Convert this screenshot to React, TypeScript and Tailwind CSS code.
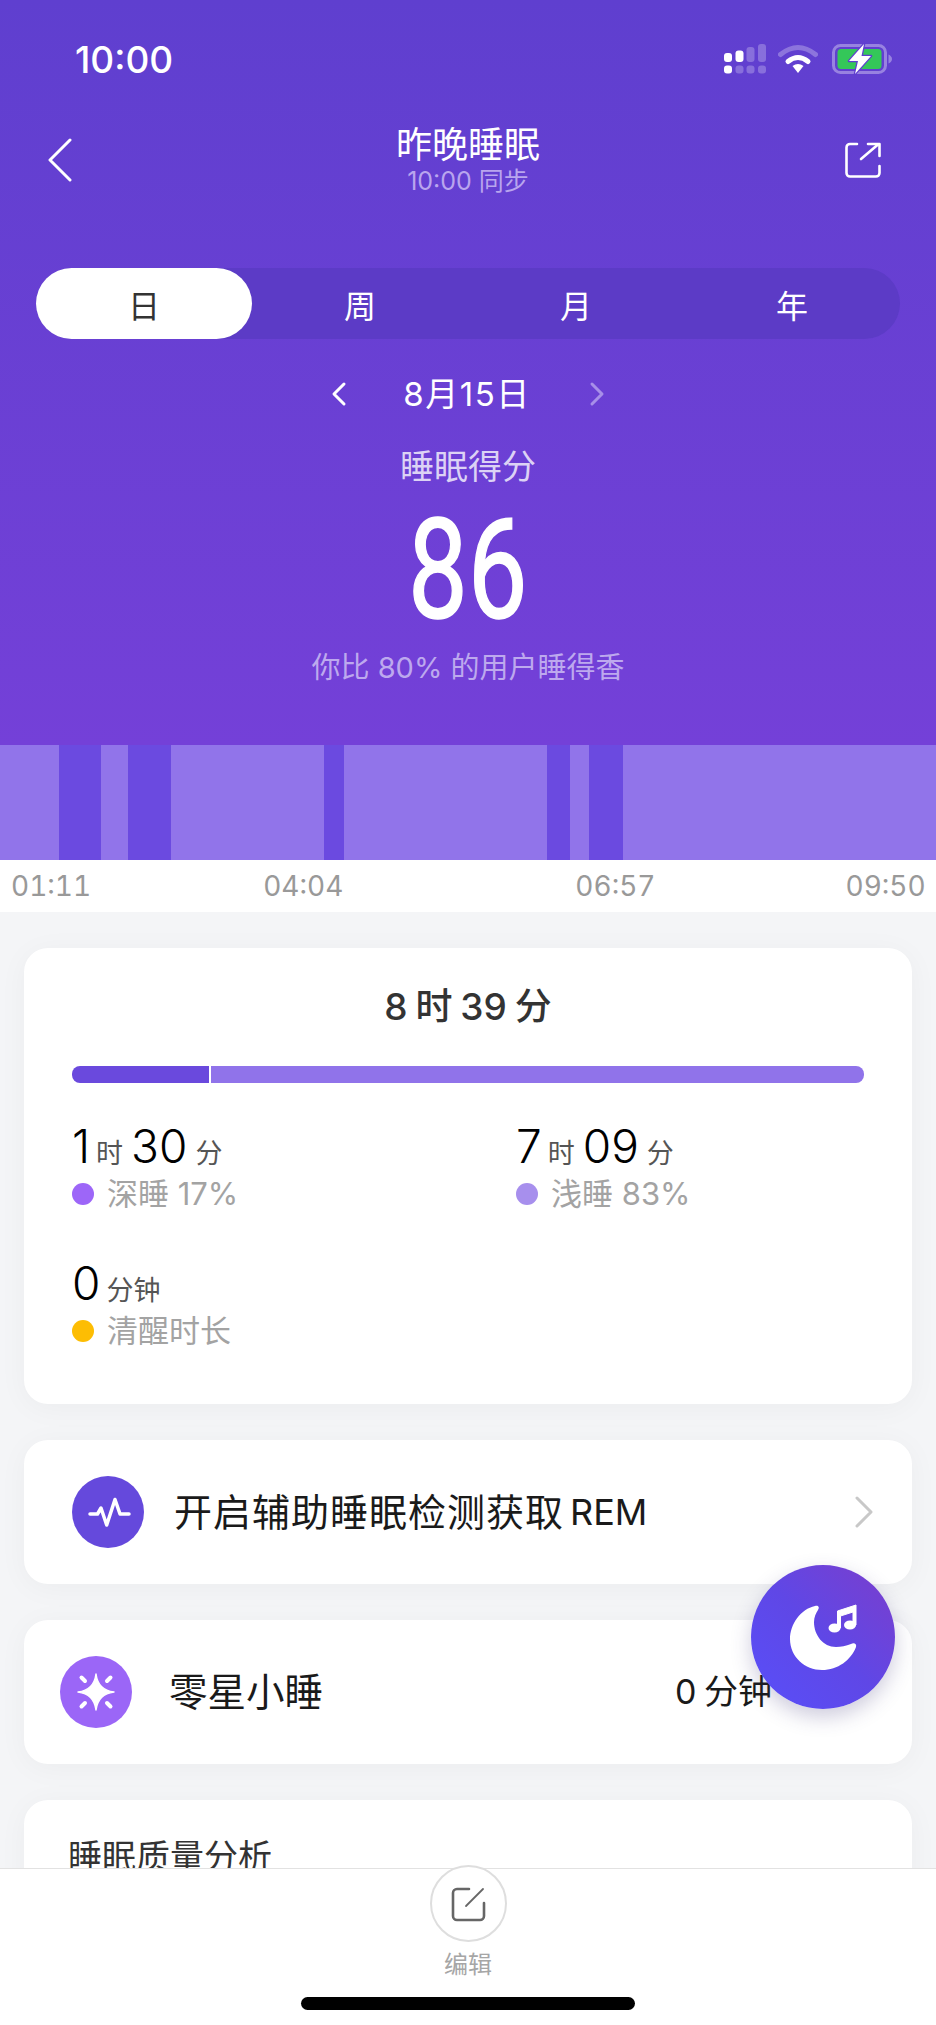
import React from "react";

const font = "font-['Inter','Noto_Sans_CJK_SC',sans-serif]";

function Signal() {
  return (
    <svg width="42" height="30" viewBox="0 0 42 30" className="block">
      <g fill="#fff">
        <rect x="0" y="9" width="8" height="9" rx="3" />
        <rect x="11.5" y="6.5" width="8" height="11.5" rx="3" />
        <rect x="0" y="21.5" width="8" height="8" rx="3" />
      </g>
      <g fill="#fff" fillOpacity="0.25">
        <rect x="22.5" y="3" width="8" height="15" rx="3" />
        <rect x="34" y="0" width="8" height="18" rx="3" />
        <rect x="11.5" y="21.5" width="8" height="8" rx="3" />
        <rect x="22.5" y="21.5" width="8" height="8" rx="3" />
        <rect x="34" y="21.5" width="8" height="8" rx="3" />
      </g>
    </svg>
  );
}

function Wifi() {
  return (
    <svg width="40" height="30" viewBox="0 0 40 30" className="block">
      <path d="M2.5 10.5Q20 -3.5 37.5 10.5" fill="none" stroke="#fff" strokeOpacity="0.28" strokeWidth="5" strokeLinecap="round" />
      <path d="M10 17.5Q20 9.5 30 17.5" fill="none" stroke="#fff" strokeWidth="5" strokeLinecap="round" />
      <path d="M14.5 22Q20 18 25.500 22L20 29Z" fill="#fff" />
    </svg>
  );
}

function Battery() {
  return (
    <svg width="60" height="32" viewBox="0 0 60 32" className="block">
      <rect x="1.5" y="2.5" width="52" height="27" rx="7" fill="none" stroke="#fff" strokeOpacity="0.35" strokeWidth="3" />
      <rect x="5.5" y="6" width="44" height="20" rx="3.5" fill="#34c759" />
      <path d="M56.5 11.5C58.5 12.5 60 14 60 16C60 18 58.5 19.5 56.5 20.5Z" fill="#fff" fillOpacity="0.35" />
      <path d="M32 1L17 18H26L23 31L39 13H29.5Z" fill="#fff" stroke="#5f3ecf" strokeWidth="2.5" strokeLinejoin="round" paintOrder="stroke" />
    </svg>
  );
}

function Share() {
  return (
    <svg width="36" height="36" viewBox="0 0 36 36" fill="none" stroke="#fff" strokeWidth="2.6" strokeLinecap="round" strokeLinejoin="round" className="block">
      <path d="M12 2H5A3.500 3.500 0 0 0 1.500 5.500V31A3.500 3.500 0 0 0 5 34.500H31A3.500 3.500 0 0 0 34.500 31V24" />
      <path d="M16 17L33 2.500" />
      <path d="M23 2H34.500V14" />
    </svg>
  );
}

function Stat({ n1, u1, n2, u2, dot, label }: { n1: string; u1: string; n2?: string; u2?: string; dot: string; label: string }) {
  return (
    <div className="flex flex-col">
      <div className="flex h-[50px] items-baseline text-[46px] leading-[50px] font-light text-black">
        <span>{n1}</span>
        <span className="ml-[6px] text-[27px] font-normal text-[#555]">{u1}</span>
        {n2 ? <span className="ml-[8px]">{n2}</span> : null}
        {u2 ? <span className="ml-[8px] text-[27px] font-normal text-[#555]">{u2}</span> : null}
      </div>
      <div className="mt-[3px] flex h-[40px] items-center">
        <span className={`h-[22px] w-[22px] rounded-full ${dot}`} />
        <span className="ml-[13px] text-[31px] leading-[40px] font-normal text-[#a3a3a3]">{label}</span>
      </div>
    </div>
  );
}

export default function App() {
  return (
    <div className={`relative h-[2025px] w-[936px] overflow-hidden bg-[#f4f5f7] ${font}`}>
      <header className="flex h-[745px] flex-col bg-gradient-to-b from-[#5f3fcf] to-[#7440d8] text-white">
        <div className="flex h-[118px] items-center">
          <span className="ml-[75px] text-[37px] leading-none font-medium">10:00</span>
          <div className="ml-auto mr-[44px] flex items-center">
            <Signal />
            <span className="ml-[12px]"><Wifi /></span>
            <span className="ml-[14px]"><Battery /></span>
          </div>
        </div>
        <div className="flex h-[110px] items-start">
          <div className="w-[120px] pl-[47px] pt-[20px]">
            <svg width="26" height="44" viewBox="0 0 26 44" fill="none" stroke="#fff" strokeWidth="3" strokeLinecap="round" strokeLinejoin="round">
              <path d="M23 2L3 22L23 42" />
            </svg>
          </div>
          <div className="flex flex-1 flex-col items-center">
            <span className="h-[50px] text-[36px] leading-[54px] font-normal">昨晚睡眠</span>
            <span className="text-[25px] leading-[26px] font-normal text-[#b9a5ee]">10:00 同步</span>
          </div>
          <div className="flex w-[120px] justify-end pr-[55px] pt-[24px]"><Share /></div>
        </div>
        <div className="mx-[36px] mt-[40px] grid h-[71px] grid-cols-4 rounded-full bg-[#5c3bc6]">
          <div className="flex items-center justify-center rounded-full bg-white pt-[6px] text-[32px] font-normal text-[#333]">日</div>
          <div className="flex items-center justify-center pt-[6px] text-[32px] font-normal">周</div>
          <div className="flex items-center justify-center pt-[6px] text-[32px] font-normal">月</div>
          <div className="flex items-center justify-center pt-[6px] text-[32px] font-normal">年</div>
        </div>
        <div className="relative mt-[30px] flex h-[50px] items-center justify-center">
          <svg width="16" height="26" viewBox="0 0 16 26" fill="none" stroke="#fff" strokeWidth="3" strokeLinecap="round" strokeLinejoin="round" className="mr-[56px]">
            <path d="M13 3L3 13L13 23" />
          </svg>
          <span className="text-[33px] leading-[50px] font-normal tracking-[1.5px]">8月15日</span>
          <svg width="16" height="26" viewBox="0 0 16 26" fill="none" stroke="#a78fe8" strokeWidth="3" strokeLinecap="round" strokeLinejoin="round" className="ml-[58px]">
            <path d="M3 3L13 13L3 23" />
          </svg>
        </div>
        <div className="mt-[28px] h-[40px] text-center text-[34px] leading-[40px] font-normal text-[#dcd2f5]">睡眠得分</div>
        <div className="mt-[23px] flex h-[120px] items-center justify-center">
          <span className="scale-x-[0.76] font-['Roboto',sans-serif] text-[140px] leading-none font-normal [-webkit-text-stroke:1.5px_#fff]">86</span>
        </div>
        <div className="mt-[18px] h-[40px] text-center text-[29px] leading-[40px] font-normal text-[#bda9ee]">你比 80% 的用户睡得香</div>
      </header>

      <div className="flex h-[115px] bg-[#9174ea]">
        <div className="w-[59px]" />
        <div className="w-[42px] bg-[#6b4ae0]" />
        <div className="w-[27px]" />
        <div className="w-[43px] bg-[#6b4ae0]" />
        <div className="w-[153px]" />
        <div className="w-[20px] bg-[#6b4ae0]" />
        <div className="w-[203px]" />
        <div className="w-[23px] bg-[#6b4ae0]" />
        <div className="w-[19px]" />
        <div className="w-[34px] bg-[#6b4ae0]" />
        <div className="flex-1" />
      </div>
      <div className="flex h-[52px] items-center bg-white text-[28px] leading-none font-normal tabular-nums text-[#999]">
        <span className="ml-[11px]">01:11</span>
        <span className="ml-[172px]">04:04</span>
        <span className="ml-[232px]">06:57</span>
        <span className="ml-[190px]">09:50</span>
      </div>

      <main className="flex flex-col gap-[36px] px-[24px] pt-[36px]">
        <section className="h-[456px] rounded-[24px] bg-white px-[48px] pt-[34px] shadow-[0_4px_30px_rgba(0,0,0,0.04)]">
          <div className="h-[50px] text-center text-[37px] leading-[50px] font-medium text-[#333] [word-spacing:-2px]">8 时 39 分</div>
          <div className="mt-[34px] flex h-[17px] w-[792px] overflow-hidden rounded-[8px]">
            <div className="w-[137px] bg-[#6a49dd]" />
            <div className="w-[2px] bg-white" />
            <div className="flex-1 bg-[#9073ea]" />
          </div>
          <div className="mt-[38px] grid grid-cols-[444px_1fr] gap-y-[44px]">
            <Stat n1="1" u1="时" n2="30" u2="分" dot="bg-[#9d66f8]" label="深睡 17%" />
            <Stat n1="7" u1="时" n2="09" u2="分" dot="bg-[#a78fed]" label="浅睡 83%" />
            <Stat n1="0" u1="分钟" dot="bg-[#fdbd03]" label="清醒时长" />
          </div>
        </section>

        <section className="flex h-[144px] items-center rounded-[24px] bg-white pl-[48px] pr-[38px] shadow-[0_4px_30px_rgba(0,0,0,0.04)]">
          <span className="flex h-[72px] w-[72px] items-center justify-center rounded-full bg-[#6549dc]">
            <svg width="72" height="72" viewBox="0 0 72 72" fill="none" stroke="#fff" strokeWidth="3.500" strokeLinecap="round" strokeLinejoin="round">
              <path d="M18 38H25.500L29 32L34.700 49L43 23.500L48 38H57" />
            </svg>
          </span>
          <span className="ml-[30px] text-[38px] leading-none font-normal tracking-[1px] text-[#1a1a1a]">开启辅助睡眠检测获取</span>
          <span className="ml-[6px] text-[36px] leading-none font-normal text-[#1a1a1a]">REM</span>
          <svg width="20" height="32" viewBox="0 0 20 32" fill="none" stroke="#c8c8c8" strokeWidth="3" strokeLinecap="round" strokeLinejoin="round" className="ml-auto">
            <path d="M3 2L17 16L3 30" />
          </svg>
        </section>

        <section className="flex h-[144px] items-center rounded-[24px] bg-white pl-[36px] pr-[140px] shadow-[0_4px_30px_rgba(0,0,0,0.04)]">
          <span className="flex h-[72px] w-[72px] items-center justify-center rounded-full bg-[#9b66f7]">
            <svg width="72" height="72" viewBox="0 0 72 72">
              <path d="M36 18Q38 34 54 36Q38 38 36 54Q34 38 18 36Q34 34 36 18Z" fill="#fff" stroke="#fff" strokeWidth="1.500" strokeLinejoin="round" />
              <path d="M21.500 21.500L25 25M50.500 21.500L47 25M21.500 50.500L25 47M50.500 50.500L47 47" stroke="#fff" strokeWidth="4" strokeLinecap="round" />
            </svg>
          </span>
          <span className="ml-[37px] text-[38.5px] leading-none font-normal text-[#1a1a1a]">零星小睡</span>
          <span className="ml-auto text-[34px] leading-none font-normal text-[#1a1a1a] [word-spacing:-2px]">0 分钟</span>
        </section>

        <section className="h-[300px] rounded-[24px] bg-white pl-[44px] pt-[34px] shadow-[0_4px_30px_rgba(0,0,0,0.04)]">
          <div className="text-[34px] leading-[46px] font-normal text-[#333]">睡眠质量分析</div>
        </section>
      </main>

      <div className="absolute left-[751px] top-[1565px] flex h-[144px] w-[144px] items-center justify-center rounded-full bg-gradient-to-tr from-[#584ffa] via-[#5f47e6] to-[#7a3dcc] shadow-[0_8px_20px_rgba(60,50,120,0.25)]">
        <svg width="144" height="144" viewBox="0 0 144 144" fill="#fff">
          <path d="M64 41C50 44 39 59 39 74C39 92 54 105 71 105C87 105 100 95 105 82C106 79 103 77 100 79C95 81 90 82 85 82C72 82 63 70 63 57C63 52 65 48 67 45C69 42 67 40 64 41Z" />
          <ellipse cx="83.500" cy="63" rx="6" ry="4.500" />
          <ellipse cx="99" cy="60" rx="6" ry="4.500" />
          <path d="M86.500 63V46L105 40V60H102V47L89.500 51V63Z" stroke="#fff" strokeWidth="1" strokeLinejoin="round" />
        </svg>
      </div>

      <footer className="absolute left-0 top-[1868px] flex h-[157px] w-[936px] flex-col items-center border-t border-[#e2e2e2] bg-white">
        <span className="-mt-[4px] flex h-[77px] w-[77px] items-center justify-center rounded-full border-2 border-[#dedede] bg-white">
          <svg width="36" height="36" viewBox="0 0 36 36" fill="none" stroke="#666" strokeWidth="2.600" strokeLinecap="round" strokeLinejoin="round">
            <path d="M19 3H7A4 4 0 0 0 3 7V30A4 4 0 0 0 7 34H30A4 4 0 0 0 34 30V17" />
            <path d="M16 20L33 3" strokeWidth="1.800" />
          </svg>
        </span>
        <span className="mt-[5px] text-[24px] leading-[36px] font-normal text-[#a6a6a6]">编辑</span>
        <span className="mt-[14px] h-[13px] w-[334px] rounded-full bg-black" />
      </footer>
    </div>
  );
}
